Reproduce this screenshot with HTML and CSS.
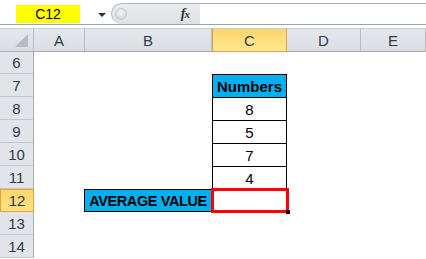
FILE: index.html
```html
<!DOCTYPE html>
<html>
<head>
<meta charset="utf-8">
<link rel="stylesheet" href="styles.css">
</head>
<body>
<div class="fbar">
  <div class="namearea">
    <div class="namebox">C12</div>
    <div class="arrow"></div>
  </div>
  <div class="pill">
    <div class="knob"></div>
    <div class="fx">f<span class="x">x</span></div>
  </div>
  <div class="finput"></div>
</div>
<div class="gap"></div>
<div class="sheet">
  <div class="hd corner"><div class="tri"></div></div>
  <div class="hd col">A</div>
  <div class="hd col">B</div>
  <div class="hd col sel">C</div>
  <div class="hd col">D</div>
  <div class="hd col">E</div>

  <div class="rh">6</div><div></div><div></div><div></div><div></div><div></div>
  <div class="rh">7</div><div></div><div></div><div class="tc blue b big">Numbers</div><div></div><div></div>
  <div class="rh">8</div><div></div><div></div><div class="tc">8</div><div></div><div></div>
  <div class="rh">9</div><div></div><div></div><div class="tc">5</div><div></div><div></div>
  <div class="rh">10</div><div></div><div></div><div class="tc">7</div><div></div><div></div>
  <div class="rh">11</div><div></div><div></div><div class="tc">4</div><div></div><div></div>
  <div class="rh rsel">12</div><div></div><div class="avg blue b">AVERAGE VALUE</div><div class="selcell"><div class="handle"></div></div><div></div><div></div>
  <div class="rh">13</div><div></div><div></div><div></div><div></div><div></div>
  <div class="rh">14</div><div></div><div></div><div></div><div></div><div></div>
</div>
</body>
</html>
```
FILE: styles.css
```css
* { box-sizing: border-box; }
html, body { margin: 0; padding: 0; background: #fff; }
body {
  width: 426px;
  height: 259px;
  overflow: hidden;
  font-family: "Liberation Sans", Arial, sans-serif;
  font-size: 14px;
  color: #000;
}
.fbar {
  display: flex;
  height: 25px;
  border-bottom: 1px solid #9da3aa;
}
.namearea {
  width: 111px;
  position: relative;
  display: flex;
  align-items: flex-start;
}
.namebox {
  margin-top: 5px;
  margin-left: 16px;
  width: 64px;
  height: 18px;
  background: #ffff00;
  text-align: center;
  line-height: 18px;
  font-size: 14px;
  color: #000;
}
.arrow {
  margin-left: 18px;
  margin-top: 13px;
  width: 0;
  height: 0;
  border-left: 4px solid transparent;
  border-right: 4px solid transparent;
  border-top: 4px solid #333;
}
.pill {
  width: 89px;
  margin-top: 3px;
  height: 21px;
  background: linear-gradient(#e9ecef, #dde1e6);
  border: 1px solid #b3b8be;
  border-right: none;
  border-bottom: none;
  border-radius: 11px 0 0 11px;
  display: flex;
  align-items: center;
  justify-content: space-between;
  padding: 0 11px 0 3px;
}
.knob {
  width: 12px;
  height: 12px;
  border-radius: 50%;
  background: radial-gradient(circle at 50% 35%, #f4f5f6, #c9ccd0);
  border: 1px solid #c3c7cc;
}
.fx {
  font-family: "Liberation Serif", serif;
  font-style: italic;
  font-weight: bold;
  font-size: 14px;
  color: #333;
  letter-spacing: -1px;
}
.fx .x { font-size: 11px; }
.finput {
  flex: 1;
  margin-top: 3px;
  border-top: 1px solid #a9aeb4;
  background: #fff;
}
.gap { height: 3px; }
.sheet {
  display: grid;
  grid-template-columns: 34px 51px 127px 75px 74px 65px;
  grid-template-rows: 24px 22px repeat(8, 23px);
}
.hd {
  background: linear-gradient(#e4e7eb, #dadee3);
  border-right: 1px solid #b8bcc1;
  border-bottom: 1px solid #a9adb2;
  border-top: 1px solid #c9cdd1;
  display: flex;
  align-items: center;
  justify-content: center;
  color: #2b3a4e;
  font-size: 15px;
}
.corner { position: relative; }
.tri {
  position: absolute;
  right: 5px;
  bottom: 4px;
  width: 0;
  height: 0;
  border-left: 13px solid transparent;
  border-bottom: 13px solid #b7bbc0;
}
.hd.sel {
  background: linear-gradient(#fcd46c, #ffe88f);
  border-left: 1px solid #d9a447;
  border-right: 1px solid #d9a447;
  border-bottom: 1px solid #d9a447;
}
.rh {
  background: #e1e5e9;
  border-right: 1px solid #a9adb2;
  border-bottom: 1px solid #c2c6ca;
  display: flex;
  align-items: center;
  justify-content: center;
  color: #2b3a4e;
  font-size: 15px;
}
.rh.rsel {
  background: linear-gradient(#fdd66c, #ffe083);
  border: 1px solid #e0a33d;
}
.tc {
  border: 1px solid #000;
  border-bottom: none;
  display: flex;
  align-items: center;
  justify-content: center;
  font-size: 15px;
}
.tc.big { font-size: 15px; }
.blue { background: #00b0f0; }
.b { font-weight: bold; }
.avg {
  grid-column: 3;
  margin-left: -1px;
  border: 1px solid #000;
  display: flex;
  align-items: center;
  justify-content: center;
  font-size: 14.5px;
  letter-spacing: -0.4px;
}
.selcell {
  position: relative;
  margin-top: -1px;
  border: 3px solid #ff0000;
  margin-right: -2px;
  margin-left: -1px;
  height: 25px;
}
.handle {
  position: absolute;
  right: -4px;
  bottom: -4px;
  width: 4px;
  height: 4px;
  background: #000;
}
```
